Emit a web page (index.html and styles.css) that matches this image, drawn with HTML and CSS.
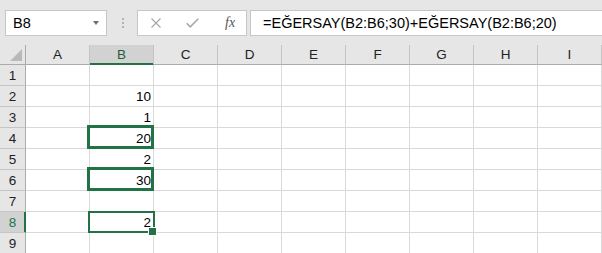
FILE: index.html
```html
<!DOCTYPE html>
<html lang="tr">
<head>
<meta charset="UTF-8">
<title>EĞERSAY</title>
<link rel="stylesheet" href="styles.css">
</head>
<body>
<div class="toolbar">
    <div class="namebox">
        <span>B8</span>
        <span class="drop"></span>
    </div>
    <div class="grip"><i></i><i></i><i></i></div>
    <div class="fx-buttons">
        <svg class="ico-x" width="10" height="10" viewBox="0 0 10 10"><path d="M0.5 0.5L9.5 9.5M9.5 0.5L0.5 9.5" stroke="#a8a8a8" stroke-width="1.2" fill="none"/></svg>
        <svg class="ico-ok" width="13" height="10" viewBox="0 0 13 10"><path d="M0.7 5.2L4.3 8.8L12.3 0.8" stroke="#a8a8a8" stroke-width="1.6" fill="none"/></svg>
        <span class="fx">fx</span>
    </div>
    <div class="formula">=EĞERSAY(B2:B6;30)+EĞERSAY(B2:B6;20)</div>
</div>

<div class="sheet">
    <div class="corner"><span class="tri"></span></div>
    <div class="col">A</div><div class="col active">B</div><div class="col">C</div><div class="col">D</div><div class="col">E</div><div class="col">F</div><div class="col">G</div><div class="col">H</div><div class="col">I</div>

    <div class="row">1</div><div class="c"></div><div class="c"></div><div class="c"></div><div class="c"></div><div class="c"></div><div class="c"></div><div class="c"></div><div class="c"></div><div class="c"></div>
    <div class="row">2</div><div class="c"></div><div class="c">10</div><div class="c"></div><div class="c"></div><div class="c"></div><div class="c"></div><div class="c"></div><div class="c"></div><div class="c"></div>
    <div class="row">3</div><div class="c"></div><div class="c">1</div><div class="c"></div><div class="c"></div><div class="c"></div><div class="c"></div><div class="c"></div><div class="c"></div><div class="c"></div>
    <div class="row">4</div><div class="c"></div><div class="c mark">20</div><div class="c"></div><div class="c"></div><div class="c"></div><div class="c"></div><div class="c"></div><div class="c"></div><div class="c"></div>
    <div class="row">5</div><div class="c"></div><div class="c">2</div><div class="c"></div><div class="c"></div><div class="c"></div><div class="c"></div><div class="c"></div><div class="c"></div><div class="c"></div>
    <div class="row">6</div><div class="c"></div><div class="c mark">30</div><div class="c"></div><div class="c"></div><div class="c"></div><div class="c"></div><div class="c"></div><div class="c"></div><div class="c"></div>
    <div class="row">7</div><div class="c"></div><div class="c"></div><div class="c"></div><div class="c"></div><div class="c"></div><div class="c"></div><div class="c"></div><div class="c"></div><div class="c"></div>
    <div class="row active">8</div><div class="c"></div><div class="c sel">2</div><div class="c"></div><div class="c"></div><div class="c"></div><div class="c"></div><div class="c"></div><div class="c"></div><div class="c"></div>
    <div class="row">9</div><div class="c"></div><div class="c"></div><div class="c"></div><div class="c"></div><div class="c"></div><div class="c"></div><div class="c"></div><div class="c"></div><div class="c"></div>
</div>
</body>
</html>
```

FILE: styles.css
```css
* {
    box-sizing: border-box;
}
body {
    margin: 0;
    width: 602px;
    height: 253px;
    overflow: hidden;
    background-color: #fff;
    font-family: "Liberation Sans", Arial, sans-serif;
    color: #000;
}

/* top bar: name box + formula */
.toolbar {
    display: flex;
    align-items: center;
    height: 45px;
    padding: 10px 0 9px 5px;
    background-color: #e6e6e6;
}
.namebox {
    display: flex;
    align-items: center;
    width: 102px;
    height: 26px;
    padding-left: 7px;
    background-color: #fff;
    border: 1px solid #c6c6c6;
    font-size: 14.5px;
}
.namebox .drop {
    margin-left: auto;
    margin-right: 7px;
    border-left: 3.5px solid transparent;
    border-right: 3.5px solid transparent;
    border-top: 4px solid #6e6e6e;
}
.grip {
    display: flex;
    flex-direction: column;
    gap: 2px;
    margin: 0 13px 0 15px;
}
.grip i {
    width: 2px;
    height: 2px;
    background-color: #b4b4b4;
}
.fx-buttons {
    display: flex;
    align-items: center;
    width: 110px;
    height: 26px;
    padding-left: 13px;
    background-color: #fff;
    border: 1px solid #c6c6c6;
}
.ico-ok {
    margin-left: 25px;
}
.fx {
    margin-left: 26px;
    font-family: "Liberation Serif", "Times New Roman", serif;
    font-style: italic;
    font-size: 14px;
    color: #555;
}
.formula {
    flex: 1;
    display: flex;
    align-items: center;
    height: 26px;
    margin-left: 3px;
    padding-left: 12px;
    background-color: #fff;
    border: 1px solid #c6c6c6;
    border-right: none;
    font-size: 14.5px;
    white-space: nowrap;
}

/* sheet grid */
.sheet {
    display: grid;
    grid-template-columns: 26px repeat(9, 64px);
    grid-template-rows: 20px repeat(9, 21px);
    font-size: 13.5px;
}
.corner,
.col,
.row {
    background-color: #e6e6e6;
    color: #222;
}
.corner {
    position: relative;
    border-right: 1px solid #ababab;
    border-bottom: 1px solid #ababab;
}
.corner .tri {
    position: absolute;
    right: 3px;
    bottom: 3px;
    border-left: 12px solid transparent;
    border-bottom: 12px solid #b9b9b9;
}
.col {
    display: flex;
    align-items: center;
    justify-content: center;
    border-right: 1px solid #c4c4c4;
    border-bottom: 1px solid #ababab;
}
.col.active {
    background-color: #d2d2d2;
    color: #1e5e3c;
    border-bottom-color: #217346;
    box-shadow: inset 0 -1px 0 #217346;
}
.row {
    display: flex;
    align-items: center;
    justify-content: center;
    border-right: 1px solid #ababab;
    border-bottom: 1px solid #c4c4c4;
}
.row.active {
    background-color: #d2d2d2;
    color: #217346;
    border-right-color: #217346;
    box-shadow: inset -1px 0 0 #217346;
}
.c {
    position: relative;
    display: flex;
    align-items: flex-end;
    justify-content: flex-end;
    padding: 0 2px 3px 0;
    line-height: 13px;
    border-right: 1px solid #d9d9d9;
    border-bottom: 1px solid #d9d9d9;
}
.c.mark::after {
    content: "";
    position: absolute;
    top: -3px;
    left: -3px;
    right: -1px;
    bottom: -1px;
    border: 3px solid #217346;
}
.c.sel::after {
    content: "";
    position: absolute;
    top: -1px;
    left: -2px;
    right: -2px;
    bottom: -1px;
    border: 2px solid #217346;
}
.c.sel::before {
    content: "";
    position: absolute;
    right: -4px;
    bottom: -4px;
    width: 7px;
    height: 7px;
    background-color: #217346;
    border: 1px solid #fff;
    z-index: 1;
}
```
